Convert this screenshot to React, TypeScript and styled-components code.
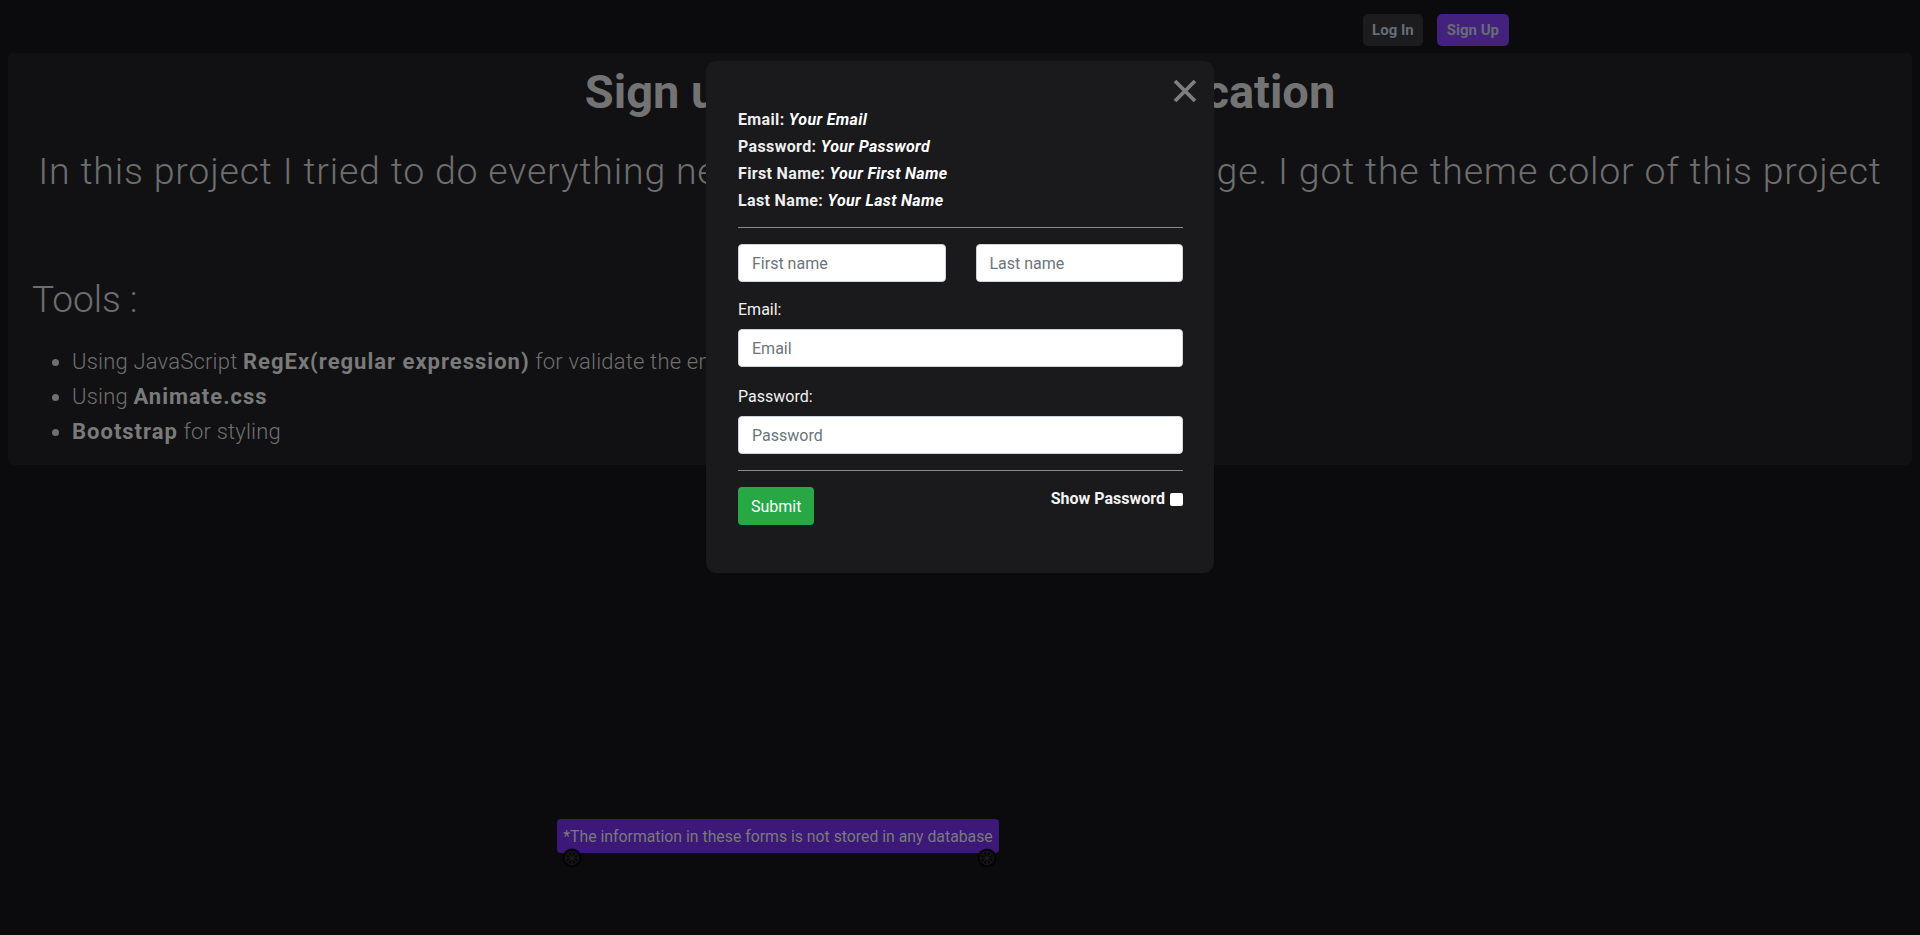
import React from "react";
import styled, { createGlobalStyle } from "styled-components";

const GlobalStyle = createGlobalStyle`
  html, body {
    margin: 0;
    padding: 0;
    background: #0b0b0d;
    font-family: Roboto, "Liberation Sans", Arial, sans-serif;
  }
  * { box-sizing: border-box; }
`;

const Page = styled.div`
  min-height: 935px;
  padding: 0 8px;
`;

const Nav = styled.nav`
  max-width: 1140px;
  margin: 0 auto;
  padding: 14px 21px 7px 15px;
  display: flex;
  justify-content: flex-end;
  gap: 14px;
`;

const NavButton = styled.button<{ $primary?: boolean }>`
  height: 32px;
  padding: 0 ${(p) => (p.$primary ? 10 : 9)}px;
  border: none;
  border-radius: 5px;
  font-family: inherit;
  font-size: 15px;
  font-weight: 700;
  color: #676d75;
  background: ${(p) => (p.$primary ? "#45217e" : "#1c1c1f")};
  cursor: pointer;
`;

const Panel = styled.section`
  background: #111113;
  border-radius: 6px;
  padding: 10px 24px 16px;
  color: #717171;
`;

const Title = styled.h1`
  margin: 0;
  font-size: 47px;
  line-height: 58px;
  font-weight: 700;
  text-align: center;
  white-space: nowrap;
  color: #737373;
`;

const Lead = styled.p`
  margin: 23px 0 0;
  font-size: 37.5px;
  line-height: 54px;
  letter-spacing: 0.8px;
  font-weight: 300;
  text-align: center;
  white-space: nowrap;
  color: #6e6e6e;
`;

const ToolsTitle = styled.h2`
  margin: 25px 0 0;
  font-size: 37px;
  line-height: 45px;
  font-weight: 300;
  color: #6e6e70;
`;

const ToolList = styled.ul`
  margin: 22px 0 0;
  padding-left: 40px;
  font-size: 22px;
  line-height: 35px;
  letter-spacing: 0.2px;
  font-weight: 300;
  color: #6f6f6f;

  b {
    font-weight: 700;
    letter-spacing: 1px;
    color: #7a7a7a;
  }
`;

const Modal = styled.div`
  position: fixed;
  top: 61px;
  left: 50%;
  transform: translateX(-50%);
  width: 508px;
  height: 512px;
  background: #1a1a1d;
  border-radius: 10px;
  padding: 45px 31px 32px 32px;
  color: #f2f2f2;
`;

const CloseButton = styled.button`
  position: absolute;
  top: 18px;
  right: 17px;
  width: 24px;
  height: 24px;
  padding: 0;
  border: none;
  background: transparent;
  cursor: pointer;
  display: flex;
`;

const InfoLine = styled.div`
  font-size: 16px;
  line-height: 27px;
  font-weight: 700;
  letter-spacing: 0.35px;
  color: #eeeeee;

  i {
    color: #ffffff;
  }
`;

const Divider = styled.hr<{ $top: number }>`
  margin: ${(p) => p.$top}px 0 16px;
  border: none;
  border-top: 1px solid #8a8a8a;
  height: 0;
`;

const NameRow = styled.div`
  display: grid;
  grid-template-columns: 1fr 1fr;
  column-gap: 30px;
  margin-bottom: 16px;
`;

const Field = styled.div<{ $gap: number }>`
  display: flex;
  flex-direction: column;
  margin-bottom: ${(p) => p.$gap}px;
`;

const Label = styled.label`
  font-size: 16px;
  line-height: 24px;
  color: #f0f0f0;
  margin-bottom: 7px;
`;

const Input = styled.input`
  height: 38px;
  width: 100%;
  padding: 0 13px;
  border: 1px solid #ced4da;
  border-radius: 4px;
  background: #ffffff;
  font-family: inherit;
  font-size: 16px;
  color: #495057;

  &::placeholder {
    color: #6c757d;
  }
`;

const Footer = styled.div`
  display: flex;
  justify-content: space-between;
  align-items: flex-start;
`;

const SubmitButton = styled.button`
  height: 38px;
  padding: 0 13px;
  border: none;
  border-radius: 4px;
  background: #28a745;
  color: #ffffff;
  font-family: inherit;
  font-size: 16px;
  cursor: pointer;
`;

const ShowPassword = styled.label`
  display: flex;
  align-items: center;
  gap: 5px;
  margin-top: 3px;
  font-size: 16px;
  line-height: 18px;
  font-weight: 700;
  color: #f2f2f2;
`;

const Check = styled.span`
  width: 13px;
  height: 13px;
  background: #ffffff;
  border-radius: 2px;
  display: inline-block;
`;

const Car = styled.div`
  position: fixed;
  left: 557px;
  top: 819px;
  width: 442px;
`;

const Banner = styled.div`
  height: 34px;
  background: #3c1878;
  border-radius: 4px;
  display: flex;
  align-items: center;
  justify-content: center;
  font-size: 15.8px;
  color: #7a7a7a;
  white-space: nowrap;
`;

const Wheels = styled.div`
  display: flex;
  justify-content: space-between;
  margin: -5px 2px 0 5px;
`;

const Wheel = () => (
  <svg width="20" height="20" viewBox="0 0 20 20">
    <circle cx="10" cy="10" r="9.5" fill="#050506" />
    <circle cx="10" cy="10" r="6.5" fill="none" stroke="#1c1c1f" strokeWidth="1" />
    {[0, 45, 90, 135].map((a) => (
      <line
        key={a}
        x1="10"
        y1="3.5"
        x2="10"
        y2="16.5"
        stroke="#1c1c1f"
        strokeWidth="1"
        transform={`rotate(${a} 10 10)`}
      />
    ))}
    <circle cx="10" cy="10" r="1.5" fill="#1c1c1f" />
  </svg>
);

export default function App() {
  return (
    <>
      <GlobalStyle />
      <Page>
        <Nav>
          <NavButton>Log In</NavButton>
          <NavButton $primary>Sign Up</NavButton>
        </Nav>
        <Panel>
          <Title>Sign up and Login Form Application</Title>
          <Lead>
            In this project I tried to do everything necessary for a login/signup page. I got the theme color of this project
            <br />
            from Twitch
          </Lead>
          <ToolsTitle>Tools :</ToolsTitle>
          <ToolList>
            <li>
              Using JavaScript <b>RegEx(regular expression)</b> for validate the email and password
            </li>
            <li>
              Using <b>Animate.css</b>
            </li>
            <li>
              <b>Bootstrap</b> for styling
            </li>
          </ToolList>
        </Panel>

        <Modal>
          <CloseButton aria-label="Close">
            <svg width="24" height="24" viewBox="0 0 24 24">
              <path d="M2 2 L22 22 M22 2 L2 22" stroke="#7f7f7f" strokeWidth="3.8" />
            </svg>
          </CloseButton>
          <InfoLine>
            Email: <i>Your Email</i>
          </InfoLine>
          <InfoLine>
            Password: <i>Your Password</i>
          </InfoLine>
          <InfoLine>
            First Name: <i>Your First Name</i>
          </InfoLine>
          <InfoLine>
            Last Name: <i>Your Last Name</i>
          </InfoLine>
          <Divider $top={13} />
          <NameRow>
            <Input placeholder="First name" />
            <Input placeholder="Last name" />
          </NameRow>
          <Field $gap={18}>
            <Label>Email:</Label>
            <Input placeholder="Email" />
          </Field>
          <Field $gap={0}>
            <Label>Password:</Label>
            <Input type="password" placeholder="Password" />
          </Field>
          <Divider $top={16} />
          <Footer>
            <SubmitButton>Submit</SubmitButton>
            <ShowPassword>
              Show Password <Check />
            </ShowPassword>
          </Footer>
        </Modal>

        <Car>
          <Banner>*The information in these forms is not stored in any database</Banner>
          <Wheels>
            <Wheel />
            <Wheel />
          </Wheels>
        </Car>
      </Page>
    </>
  );
}
